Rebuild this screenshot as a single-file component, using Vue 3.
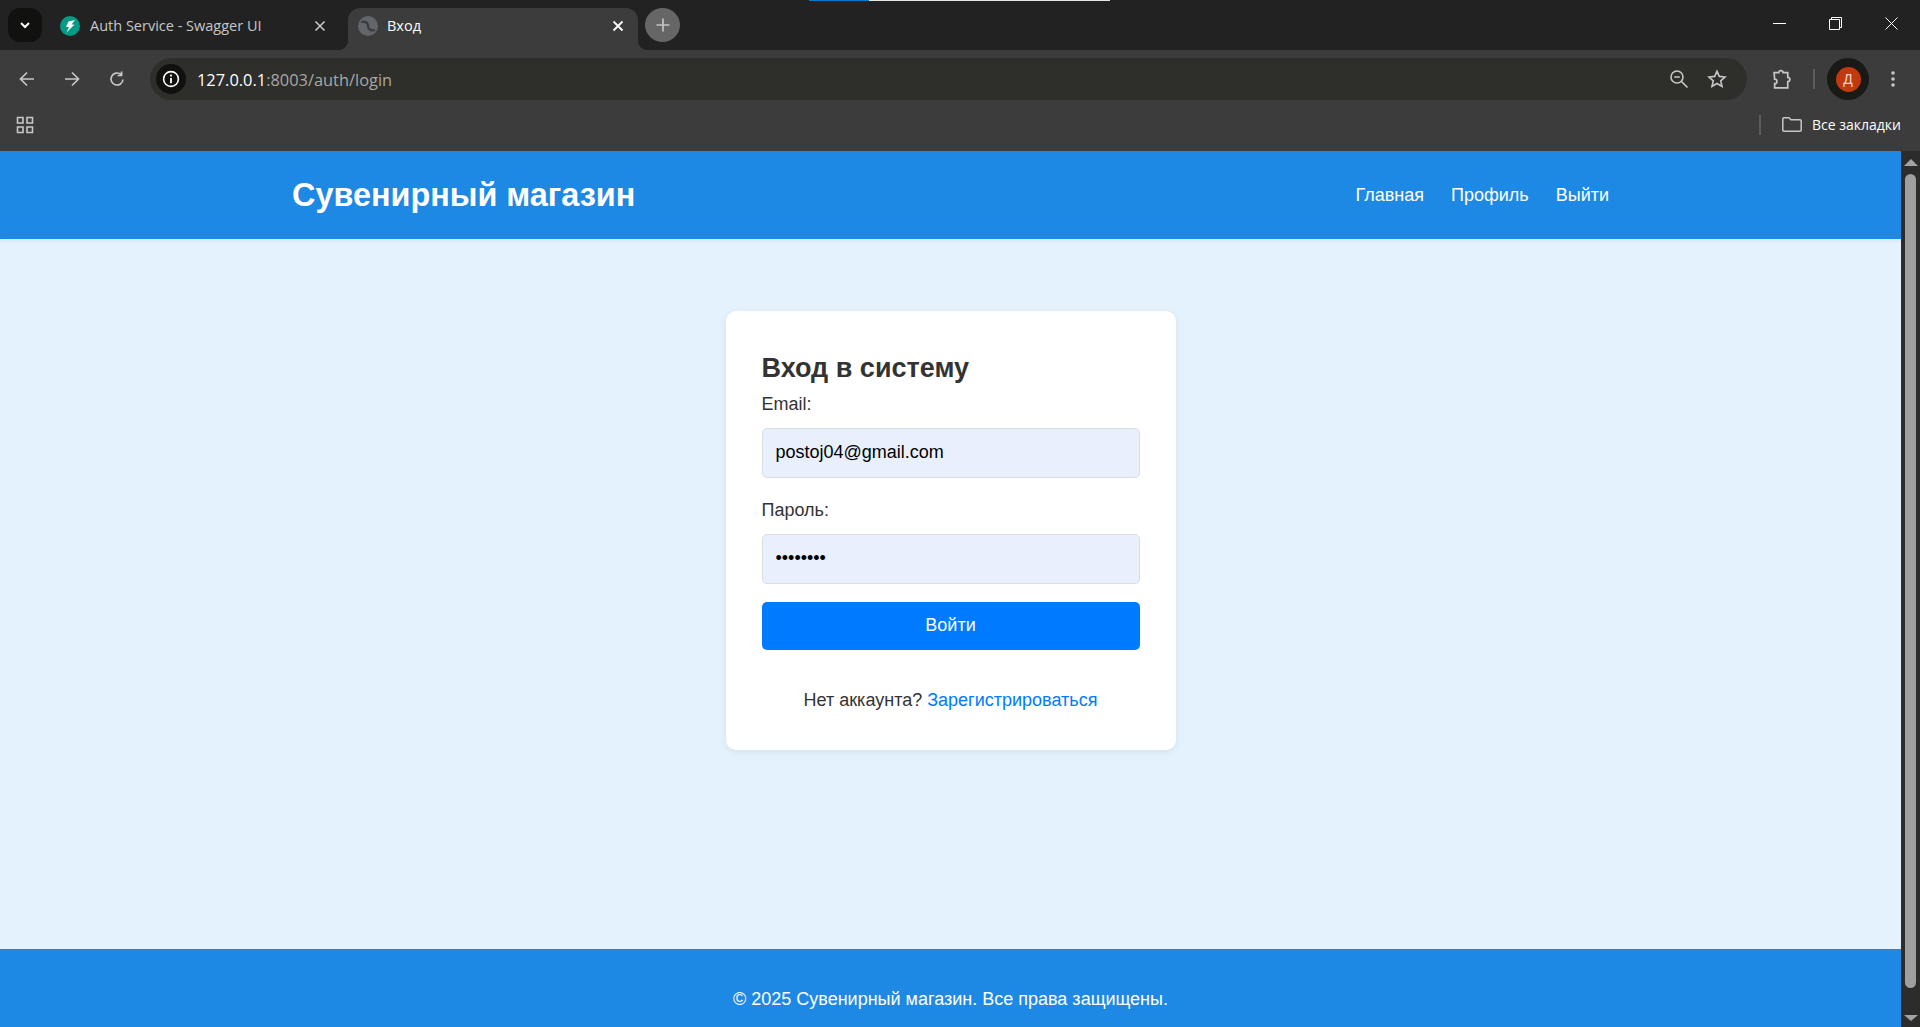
<template>
  <div class="window">
    <div class="load-line"><i></i></div>

    <!-- вкладки -->
    <div class="tabstrip">
      <div class="tab-search">
        <svg viewBox="0 0 12 12" width="12" height="12" fill="none" stroke="#fff" stroke-width="2"><path d="M2 4l4 4 4-4" /></svg>
      </div>
      <div class="tab first">
        <svg class="favicon" viewBox="0 0 20 20">
          <circle cx="10" cy="10" r="10" fill="#059a85" />
          <path d="M8.500 5.500L15 4l-3.500 4.500h3L6.500 16.500 9 11H6z" fill="#fff" />
        </svg>
        <span class="tab-title">{{ tabs[0] }}</span>
        <svg class="tab-close" viewBox="0 0 12 12" fill="none" stroke="#c7c7c7" stroke-width="1.6"><path d="M1.5 1.5l9 9M10.5 1.5l-9 9" /></svg>
      </div>
      <div class="tab active">
        <svg class="favicon" viewBox="0 0 20 20">
          <circle cx="10" cy="10" r="10" fill="#62666b" />
          <path d="M3 6c3-1 7 0 7 4s4 5 7 4" fill="none" stroke="#3c3c3c" stroke-width="2.2" />
        </svg>
        <span class="tab-title">{{ tabs[1] }}</span>
        <svg class="tab-close" viewBox="0 0 12 12" fill="none" stroke="#fff" stroke-width="1.8"><path d="M1.5 1.5l9 9M10.5 1.5l-9 9" /></svg>
      </div>
      <div class="new-tab">
        <svg viewBox="0 0 16 16" width="16" height="16" fill="none" stroke="#c4c4c4" stroke-width="1.7"><path d="M8 1.500v13M1.500 8h13" /></svg>
      </div>
      <div class="win-controls">
        <svg viewBox="0 0 13 13" width="13" height="13" fill="none" stroke="#fff"><path d="M0 6.500h13" /></svg>
        <svg viewBox="0 0 13 13" width="13" height="13" fill="none" stroke="#fff"><path d="M.5 2.500h10v10H.5zM2.500 2.500V.5h10v10h-2" /></svg>
        <svg viewBox="0 0 13 13" width="13" height="13" fill="none" stroke="#fff"><path d="M.5.5l12 12M12.500.5l-12 12" /></svg>
      </div>
    </div>

    <!-- адресная строка -->
    <div class="toolbar">
      <svg class="tool" viewBox="0 0 18 18" fill="none" stroke="#c7c7c7" stroke-width="1.7"><path d="M16 9H2.500M9 2.500L2.500 9 9 15.500" /></svg>
      <svg class="tool" viewBox="0 0 18 18" fill="none" stroke="#c7c7c7" stroke-width="1.7"><path d="M2 9h13.500M9 2.500L15.500 9 9 15.500" /></svg>
      <svg class="tool" viewBox="0 0 18 18" fill="none" stroke="#c7c7c7" stroke-width="1.7"><path d="M15 9.500A6 6 0 1 1 13 4.500M13.600 1.500v4h-4" /></svg>
      <div class="omnibox">
        <div class="site-info">
          <svg viewBox="0 0 18 18" width="18" height="18" fill="none" stroke="#fff" stroke-width="1.6">
            <circle cx="9" cy="9" r="7.400" />
            <path d="M9 8v5.200M9 4.600v1.800" stroke-width="1.800" />
          </svg>
        </div>
        <span class="url"><b>127.0.0.1</b>:8003/auth/login</span>
        <svg class="omni-icon zoom-icon" viewBox="0 0 20 20" fill="none" stroke="#c7c7c7" stroke-width="1.6">
          <circle cx="8" cy="8" r="6" />
          <path d="M5.200 8h5.600M12.500 12.500l6 6" />
        </svg>
        <svg class="omni-icon" viewBox="0 0 20 20" fill="none" stroke="#c7c7c7" stroke-width="1.6">
          <path d="M10 2.200l2.300 5.200 5.700.6-4.300 3.800 1.300 5.600-5-2.900-5 2.900 1.300-5.600L2 8l5.700-.6z" />
        </svg>
      </div>
      <svg class="puzzle" viewBox="0 0 20 20" fill="none" stroke="#c7c7c7" stroke-width="1.6">
        <path d="M2 3.500h4.500a2 2 0 0 1 4 0H15v4.500a2 2 0 0 1 0 4v6H2.500v-4a2.200 2.200 0 0 0 0-4.400z" />
      </svg>
      <span class="divider tool-divider"></span>
      <div class="avatar"><span>Д</span></div>
      <svg class="dots" viewBox="0 0 4 16" width="4" height="16" fill="#c7c7c7">
        <circle cx="2" cy="2" r="1.800" /><circle cx="2" cy="8" r="1.800" /><circle cx="2" cy="14" r="1.800" />
      </svg>
    </div>

    <!-- закладки -->
    <div class="bookmarks">
      <svg class="apps" viewBox="0 0 18 18" fill="none" stroke="#c7c7c7" stroke-width="1.6">
        <path d="M1.500 1.500h5.500v5.500H1.500zM11 1.500h5.500v5.500H11zM1.500 11h5.500v5.500H1.500zM11 11h5.500v5.500H11z" />
      </svg>
      <span class="divider mark-divider"></span>
      <svg class="folder" viewBox="0 0 20 15" fill="none" stroke="#c7c7c7" stroke-width="1.5">
        <path d="M.8 2A1.200 1.200 0 0 1 2 .8h5l2 2h9A1.200 1.200 0 0 1 19.200 4v9A1.200 1.200 0 0 1 18 14.200H2A1.200 1.200 0 0 1 .8 13z" />
      </svg>
      <span class="mark-text">Все закладки</span>
    </div>

    <div class="viewport">
      <div class="page">
        <header class="site-header">
          <div class="header-inner">
            <h1>Сувенирный магазин</h1>
            <nav>
              <a v-for="item in navItems" :key="item" href="#">{{ item }}</a>
            </nav>
          </div>
        </header>

        <main class="site-main">
          <form class="login-card" @submit.prevent>
            <h2>Вход в систему</h2>
            <label for="email">Email:</label>
            <input id="email" type="email" :value="email" readonly />
            <label for="password">Пароль:</label>
            <input id="password" type="password" :value="password" readonly />
            <button type="submit">Войти</button>
            <p class="register">Нет аккаунта? <a href="#">Зарегистрироваться</a></p>
          </form>
        </main>

        <footer class="site-footer">© 2025 Сувенирный магазин. Все права защищены.</footer>
      </div>

      <div class="scrollbar">
        <span class="arrow up"></span>
        <span class="thumb"></span>
        <span class="arrow down"></span>
      </div>
    </div>
  </div>
</template>

<script setup>
const tabs = ['Auth Service - Swagger UI', 'Вход']
const navItems = ['Главная', 'Профиль', 'Выйти']
const email = 'postoj04@gmail.com'
const password = '12345678'
</script>

<style>
html,
body {
  margin: 0;
  overflow: hidden;
}
</style>

<style scoped>
.window {
  position: relative;
  display: flex;
  flex-direction: column;
  height: 1027px;
  overflow: hidden;
  font-family: "Liberation Sans", Arial, sans-serif;
}

.load-line {
  position: absolute;
  top: 0;
  left: 809px;
  width: 301px;
  height: 1px;
  background: #e6e6e6;
}

.load-line i {
  display: block;
  width: 60px;
  height: 1px;
  background: #0078d4;
}

.tabstrip {
  display: flex;
  align-items: flex-start;
  height: 50px;
  padding: 8px 0 0 8px;
  box-sizing: border-box;
  background: #222222;
}

.tab-search {
  display: flex;
  align-items: center;
  justify-content: center;
  width: 34px;
  height: 34px;
  border-radius: 12px;
  background: #111110;
}

.tab {
  display: flex;
  align-items: center;
  width: 290px;
  height: 42px;
  padding: 0 14px 6px 10px;
  box-sizing: border-box;
  border-radius: 12px 12px 0 0;
  color: #c7c7c7;
  font-family: "Open Sans", sans-serif;
  font-size: 14.5px;
}

.tab.first {
  width: 306px;
  padding-left: 18px;
  padding-right: 0;
}

.tab.active {
  position: relative;
  background: #3c3c3c;
  color: #fff;
}

.tab.active::before,
.tab.active::after {
  content: "";
  position: absolute;
  bottom: 0;
  width: 10px;
  height: 10px;
}

.tab.active::before {
  left: -10px;
  background: radial-gradient(circle at 0 0, transparent 10px, #3c3c3c 10.5px);
}

.tab.active::after {
  right: -10px;
  background: radial-gradient(circle at 100% 0, transparent 10px, #3c3c3c 10.5px);
}

.favicon {
  flex: none;
  width: 20px;
  height: 20px;
  margin-right: 10px;
}

.tab.active .favicon {
  margin-right: 9px;
}

.tab-title {
  flex: 1;
  margin-top: -2px;
  white-space: nowrap;
}

.tab-close {
  flex: none;
  width: 12px;
  height: 12px;
  margin-right: 22px;
}

.tab.active .tab-close {
  margin-right: 0;
}

.new-tab {
  display: flex;
  align-items: center;
  justify-content: center;
  width: 35px;
  height: 34px;
  margin-left: 7px;
  border-radius: 50%;
  background: #666666;
}

.win-controls {
  display: flex;
  align-items: center;
  gap: 43px;
  margin-left: auto;
  height: 30px;
  padding-right: 22px;
}

.toolbar {
  display: flex;
  align-items: center;
  height: 50px;
  padding: 8px 0 0 18px;
  box-sizing: border-box;
  background: #3c3c3c;
}

.tool {
  flex: none;
  width: 18px;
  height: 18px;
  margin-right: 27px;
}

.omnibox {
  display: flex;
  align-items: center;
  flex: none;
  width: 1597px;
  height: 42px;
  margin-left: -3px;
  padding: 0 20px 0 6px;
  box-sizing: border-box;
  border-radius: 21px;
  background: #2e2e2a;
}

.site-info {
  display: flex;
  align-items: center;
  justify-content: center;
  flex: none;
  width: 30px;
  height: 30px;
  border-radius: 50%;
  background: #111110;
}

.url {
  flex: 1;
  margin-left: 11px;
  color: #a8a8a8;
  font-family: "Open Sans", sans-serif;
  font-size: 16.4px;
}

.url b {
  color: #fff;
  font-weight: 400;
}

.omni-icon {
  flex: none;
  width: 20px;
  height: 20px;
  margin-left: 20px;
}

.omni-icon.zoom-icon {
  margin-right: -2px;
}

.puzzle {
  flex: none;
  width: 21px;
  height: 21px;
  margin-left: 25px;
}

.divider {
  flex: none;
  width: 2px;
  height: 20px;
  background: #5c5c5c;
}

.tool-divider {
  margin-left: 20px;
}

.avatar {
  display: flex;
  align-items: center;
  justify-content: center;
  flex: none;
  width: 42px;
  height: 42px;
  margin-left: 12px;
  border-radius: 50%;
  background: #191916;
}

.avatar span {
  width: 25px;
  height: 25px;
  border-radius: 50%;
  background: #c1390f;
  color: #f3d3c8;
  font-size: 14px;
  line-height: 25px;
  text-align: center;
}

.dots {
  flex: none;
  margin-left: 22px;
}

.bookmarks {
  display: flex;
  align-items: center;
  height: 51px;
  padding: 0 19px 2px 16px;
  box-sizing: border-box;
  background: #3c3c3c;
}

.apps {
  flex: none;
  width: 18px;
  height: 18px;
}

.mark-divider {
  margin-left: auto;
}

.folder {
  flex: none;
  width: 20px;
  height: 15px;
  margin: 0 10px 0 21px;
}

.mark-text {
  color: #fff;
  font-family: "Open Sans", sans-serif;
  font-size: 14px;
  white-space: nowrap;
}

.viewport {
  display: flex;
  flex: 1;
  min-height: 0;
}

.page {
  display: flex;
  flex: 1;
  flex-direction: column;
  background: #e3f2fd;
}

.site-header {
  flex: none;
  height: 88px;
  background: #1e88e5;
  box-shadow: 0 2px 4px rgba(0, 0, 0, 0.05);
  color: #fff;
}

.header-inner {
  display: flex;
  align-items: center;
  justify-content: space-between;
  height: 100%;
  padding: 0 292px;
}

.header-inner h1 {
  margin: 0;
  font-size: 32.4px;
  font-weight: 700;
}

nav {
  display: flex;
  gap: 27px;
}

nav a {
  color: #fff;
  font-size: 18px;
  text-decoration: none;
}

.site-main {
  display: flex;
  flex: 1;
  justify-content: center;
  align-items: flex-start;
  padding-top: 72px;
}

.login-card {
  display: flex;
  flex-direction: column;
  width: 450px;
  height: 439px;
  padding: 40px 36px 0;
  box-sizing: border-box;
  border-radius: 10px;
  background: #fff;
  box-shadow: 0 2px 8px rgba(0, 0, 0, 0.07);
  color: #333;
}

.login-card h2 {
  margin: 0;
  font-size: 27px;
  line-height: 34px;
}

.login-card label {
  margin-top: 7px;
  font-size: 18px;
  line-height: 24px;
}

.login-card label + input + label {
  margin-top: 6px;
}

.login-card input {
  width: 100%;
  height: 50px;
  margin: 12px 0 14px;
  padding: 0 13px 2px;
  box-sizing: border-box;
  border: 1px solid #d9dde4;
  border-radius: 5px;
  outline: none;
  background: #e8f0fe;
  color: #000;
  font-family: inherit;
  font-size: 18px;
}

.login-card button {
  height: 48px;
  margin-top: 4px;
  padding: 0 0 2px;
  border: none;
  border-radius: 5px;
  background: #007bff;
  color: #fff;
  font-family: inherit;
  font-size: 18px;
}

.register {
  margin: 38px 0 0;
  font-size: 18px;
  line-height: 24px;
  text-align: center;
}

.register a {
  color: #007bff;
  text-decoration: none;
}

.site-footer {
  flex: none;
  height: 78px;
  padding-top: 40px;
  box-sizing: border-box;
  background: #1e88e5;
  color: #fff;
  font-size: 18px;
  line-height: 20px;
  text-align: center;
}

.scrollbar {
  display: flex;
  flex: none;
  flex-direction: column;
  align-items: center;
  width: 19px;
  padding: 8px 0 6px;
  box-sizing: border-box;
  background: #2c2c2c;
}

.arrow {
  flex: none;
  width: 0;
  height: 0;
  border-left: 7px solid transparent;
  border-right: 7px solid transparent;
}

.arrow.up {
  border-bottom: 7px solid #a3a3a3;
}

.arrow.down {
  margin-top: auto;
  border-top: 6px solid #a3a3a3;
}

.thumb {
  width: 11px;
  height: 814px;
  margin-top: 8px;
  border-radius: 6px;
  background: #9f9f9f;
}
</style>
